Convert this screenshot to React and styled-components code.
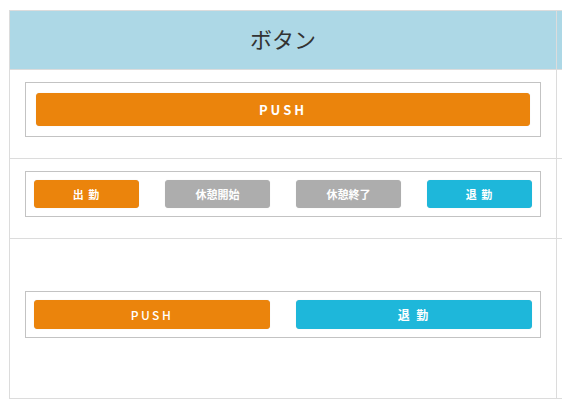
import React from "react";
import styled, { createGlobalStyle } from "styled-components";

const GlobalStyle = createGlobalStyle`
  html, body {
    margin: 0;
    padding: 0;
    background: #fff;
    font-family: "Noto Sans CJK JP", "Noto Sans", sans-serif;
  }
`;

const Page = styled.div`
  width: 100vw;
  height: 100vh;
  overflow: hidden;
  padding: 10px 0 0 9px;
  box-sizing: border-box;
`;

const Table = styled.div`
  display: grid;
  grid-template-columns: 547px 200px;
  width: max-content;
  border-top: 1px solid #dcdcdc;
  border-left: 1px solid #dcdcdc;
`;

const Cell = styled.div`
  box-sizing: border-box;
  border-right: 1px solid #dcdcdc;
  border-bottom: 1px solid #dcdcdc;
  padding: 12px 15px;
  display: flex;
  flex-direction: column;
  justify-content: center;
  min-height: ${(p) => p.$minHeight || 0}px;
`;

const HeadCell = styled.div`
  box-sizing: border-box;
  height: 59px;
  background: #add8e6;
  border-right: 1px solid #dcdcdc;
  border-bottom: 1px solid #dcdcdc;
  display: flex;
  align-items: center;
  justify-content: center;
  font-size: 22px;
  color: #333;
  padding-bottom: 4px;
`;

const Box = styled.div`
  border: 1px solid #c3c3c3;
  padding: ${(p) => p.$pad}px;
  margin-bottom: 9px;
  display: grid;
  grid-template-columns: repeat(${(p) => p.$cols}, 1fr);
  column-gap: 26px;
`;

const colors = {
  orange: "#eb840c",
  gray: "#adadad",
  cyan: "#1eb7da",
};

const Button = styled.button`
  box-sizing: border-box;
  height: ${(p) => p.$h}px;
  background: ${(p) => colors[p.$color]};
  border: 1px solid ${(p) => colors[p.$color]};
  box-shadow: 0 0 1px rgba(0, 0, 0, 0.15);
  border-radius: 3px;
  color: #fff;
  font-family: "Noto Sans CJK JP", "Noto Sans", sans-serif;
  font-size: ${(p) => p.$size || 12}px;
  font-weight: ${(p) => p.$weight || 700};
  letter-spacing: ${(p) => p.$ls || 0}px;
  padding: 0;
  cursor: pointer;
  display: flex;
  align-items: center;
  justify-content: center;
`;

export default function App() {
  return (
    <Page>
      <GlobalStyle />
      <Table>
        <HeadCell>ボタン</HeadCell>
        <HeadCell />

        <Cell>
          <Box $pad={10} $cols={1}>
            <Button $color="orange" $h={33} $size={13} $ls={3}>
              PUSH
            </Button>
          </Box>
        </Cell>
        <Cell />

        <Cell>
          <Box $pad={8} $cols={4}>
            <Button $color="orange" $h={28} $size={11} $ls={1}>
              出 勤
            </Button>
            <Button $color="gray" $h={28} $size={11}>
              休憩開始
            </Button>
            <Button $color="gray" $h={28} $size={11}>
              休憩終了
            </Button>
            <Button $color="cyan" $h={28} $size={11} $ls={1}>
              退 勤
            </Button>
          </Box>
        </Cell>
        <Cell />

        <Cell $minHeight={160}>
          <Box $pad={8} $cols={2}>
            <Button $color="orange" $h={29} $size={12} $ls={2.5} $weight={500}>
              PUSH
            </Button>
            <Button $color="cyan" $h={29} $size={12} $ls={2}>
              退 勤
            </Button>
          </Box>
        </Cell>
        <Cell $minHeight={160} />
      </Table>
    </Page>
  );
}
